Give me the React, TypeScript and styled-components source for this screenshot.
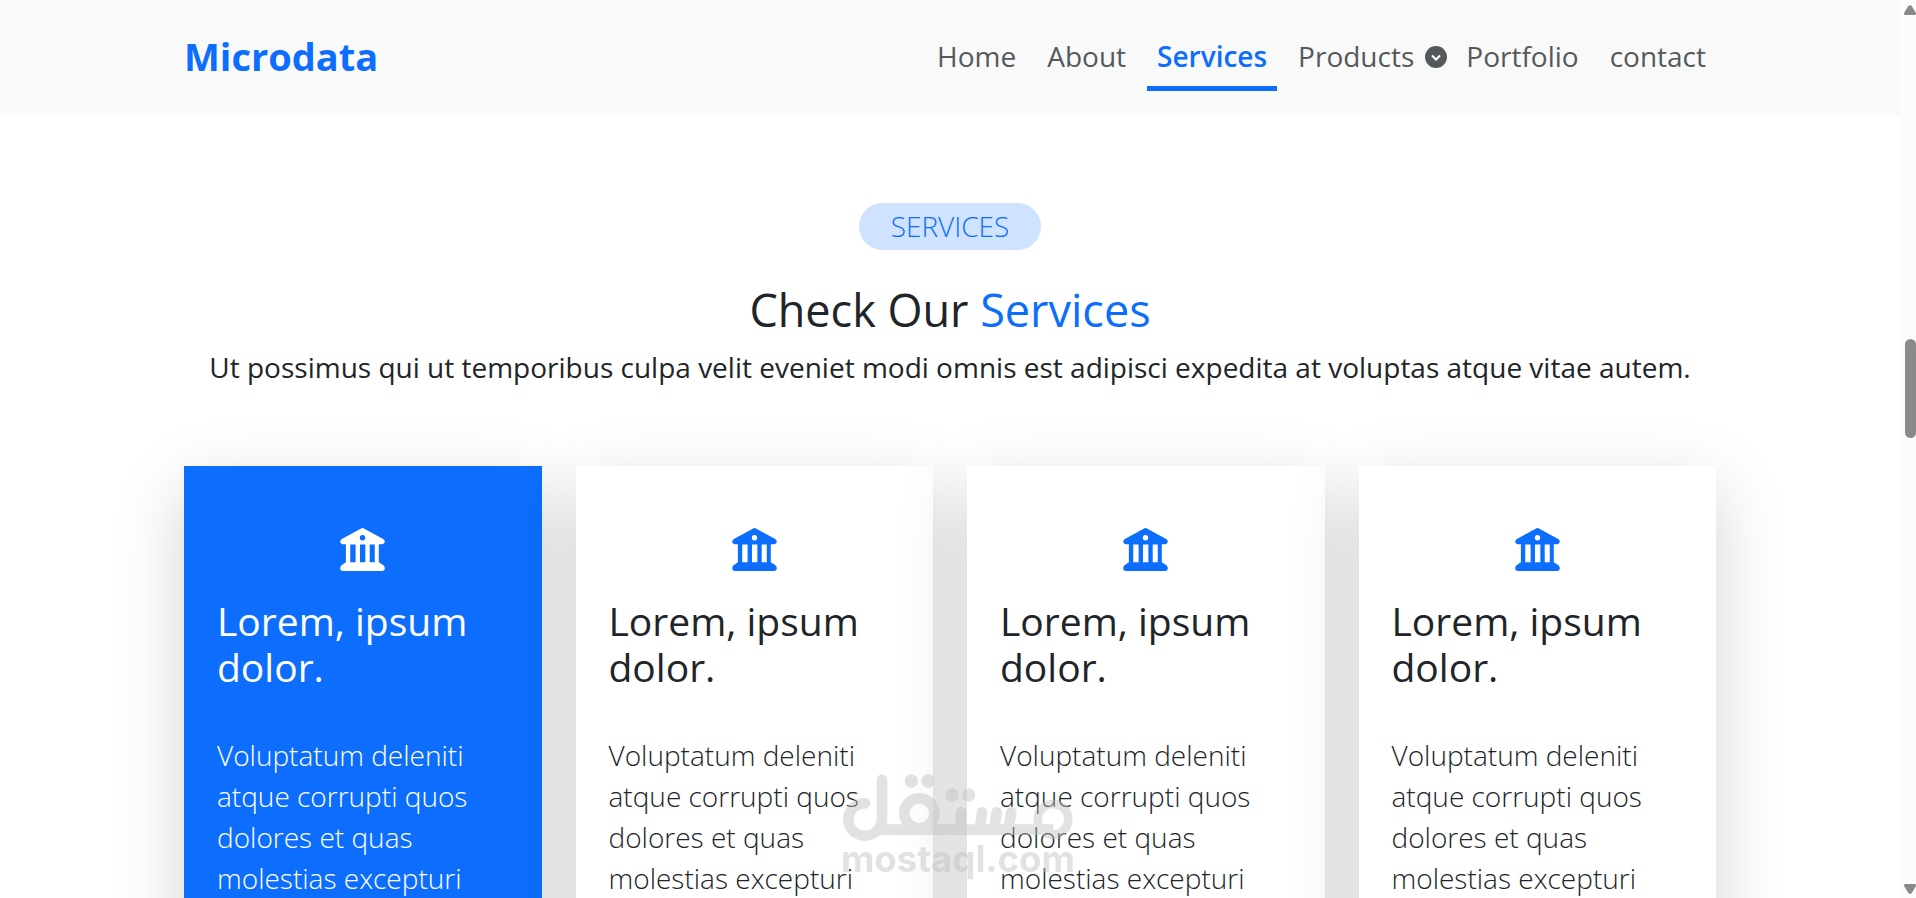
import React from "react";
import styled, { createGlobalStyle, css } from "styled-components";

const blue = "#0d6efd";
const ink = "#212529";

const GlobalStyle = createGlobalStyle`
  * { box-sizing: border-box; }
  html { overflow: hidden; height: 100%; }
  body {
    margin: 0;
    height: 100%;
    background: #fff;
    color: ${ink};
    font: 400 28px/41px "Open Sans", "Noto Sans", sans-serif;
  }
  #root { height: 100%; }
  h1, h2, h3, p { margin: 0; }
  a { color: inherit; text-decoration: none; }
`;

const Page = styled.div`
  display: flex;
  height: 100%;
`;

const Content = styled.div`
  flex: 1;
  min-width: 0;
  overflow: hidden;
`;

const Header = styled.header`
  background: linear-gradient(#f9f9f9, #f8f9fa);
`;

const Container = styled.div`
  max-width: 1532px;
  margin: 0 auto;
`;

const HeaderRow = styled(Container)`
  display: flex;
  align-items: center;
  justify-content: space-between;
  height: 115px;
`;

const Brand = styled.a`
  && { color: ${blue}; }
  padding-bottom: 2px;
  font-size: 38px;
  font-weight: 700;
`;

const NavList = styled.ul`
  display: flex;
  align-items: center;
  gap: 11px;
  margin: 0;
  padding: 0;
  list-style: none;
`;

const NavItem = styled.li<{ $menu?: boolean }>`
  margin-right: ${(p) => (p.$menu ? -12 : 0)}px;
`;

const NavLink = styled.a<{ $active?: boolean }>`
  display: flex;
  align-items: center;
  gap: 11px;
  padding: 7px 10px 9px;
  border-top: 5px solid transparent;
  border-bottom: 5px solid transparent;
  color: #55595c;
  svg { width: 22px; height: 22px; }
  ${(p) =>
    p.$active &&
    css`
      && { color: ${blue}; }
      font-weight: 600;
      border-bottom-color: ${blue};
    `}
`;

const Section = styled.section`
  padding-top: 88px;
`;

const Intro = styled.div`
  display: flex;
  flex-direction: column;
  align-items: center;
  text-align: center;
  margin-bottom: 78px;
`;

const Pill = styled.span`
  padding: 3px 32px;
  border-radius: 24px;
  background: #cfe2ff;
  color: ${blue};
  font-weight: 300;
`;

const Title = styled.h2`
  margin: 33px 0 11px;
  font-size: 45px;
  line-height: 53px;
  font-weight: 500;
  span { color: ${blue}; }
`;

const Cards = styled.div`
  display: grid;
  grid-template-columns: repeat(4, minmax(0, 1fr));
  gap: 34px;
`;

const Card = styled.article<{ $active?: boolean }>`
  position: relative;
  padding: 62px 33px;
  background: ${(p) => (p.$active ? blue : "#fff")};
  color: ${(p) => (p.$active ? "#fff" : ink)};
  box-shadow: 0 22px 66px rgba(0, 0, 0, 0.175);
`;

const CardIcon = styled.div<{ $active?: boolean }>`
  display: flex;
  justify-content: center;
  color: ${(p) => (p.$active ? "#fff" : blue)};
  svg { width: 45px; height: 43px; }
`;

const CardTitle = styled.h3`
  margin: 27px 0 45px;
  font-size: 39px;
  line-height: 46px;
  font-weight: 500;
`;

const CardText = styled.p`
  font-weight: 300;
`;

const ScrollTrack = styled.div`
  display: flex;
  flex-direction: column;
  align-items: center;
  justify-content: space-between;
  width: 16px;
  padding: 5px 0 4px 4px;
  background: #fcfcfc;
  svg { width: 12px; height: 10px; }
`;

const ScrollThumb = styled.div`
  width: 11px;
  height: 99px;
  margin-bottom: 122px;
  border-radius: 6px;
  background: #8a8a8a;
`;

const WatermarkLayer = styled.div`
  position: fixed;
  left: 0;
  right: 0;
  bottom: 16px;
  display: flex;
  justify-content: center;
  opacity: 0.46;
  pointer-events: none;
  svg { width: 236px; height: 110px; }
  text { font: 700 110px "Inter", sans-serif; }
`;

const Bank = () => (
  <svg viewBox="0 0 133 128" fill="currentColor" fillRule="evenodd" aria-hidden="true">
    <path d="M61 2Q66.500-2 72 2L128 33Q133 36 133 41Q132 48 125 48H115V102L128 110Q133 114 133 119Q133 128 124 128H9Q0 128 0 119Q0 114 5 110L17 102V48H8Q1 48 0 41Q0 36 5 33ZM30 49V102H46V49ZM59 49V102H75V49ZM88 49V102H103V49ZM66.500 21A8 8 0 1 0 66.500 37A8 8 0 1 0 66.500 21Z" />
  </svg>
);

const CircleChevron = () => (
  <svg viewBox="0 0 22 22" aria-hidden="true">
    <circle cx="11" cy="11" r="11" fill="currentColor" />
    <path d="M7 9.500L11 13.500L15 9.500" fill="none" stroke="#fff" strokeWidth="2" />
  </svg>
);

const Watermark = () => (
  <WatermarkLayer>
    <svg viewBox="60 96 708 330" role="img" aria-label="مستقل mostaql.com">
      <g fill="none" stroke="#c0c0c0" strokeWidth="32" strokeLinecap="round">
        <path d="M135 190C105 190 85 212 85 238C85 266 108 287 135 287C164 287 186 264 186 238V119" />
        <path d="M180 269H700" strokeLinecap="butt" />
        <circle cx="298" cy="220" r="45" />
        <path d="M423 217V269M486 217L480 262M530 217L523 262M574 217L566 262" />
        <circle cx="699" cy="238" r="46" strokeWidth="26" />
      </g>
      <g fill="#c0c0c0">
        <circle cx="274" cy="123" r="20" />
        <circle cx="324" cy="123" r="20" />
        <circle cx="396" cy="165" r="20" />
        <circle cx="446" cy="165" r="20" />
        <text x="414" y="395" textAnchor="middle">mostaql.com</text>
      </g>
    </svg>
  </WatermarkLayer>
);

const links = ["Home", "About", "Services", "Products", "Portfolio", "contact"];
const cards = [1, 2, 3, 4];

export default function App() {
  return (
    <>
      <GlobalStyle />
      <Page>
        <Content>
          <Header>
            <HeaderRow>
              <Brand href="#home">Microdata</Brand>
              <nav>
                <NavList>
                  {links.map((name) => (
                    <NavItem key={name} $menu={name === "Products"}>
                      <NavLink
                        href={`#${name.toLowerCase()}`}
                        $active={name === "Services"}
                      >
                        {name}
                        {name === "Products" && <CircleChevron />}
                      </NavLink>
                    </NavItem>
                  ))}
                </NavList>
              </nav>
            </HeaderRow>
          </Header>
          <Section id="services">
            <Container>
              <Intro>
                <Pill>SERVICES</Pill>
                <Title>
                  Check Our <span>Services</span>
                </Title>
                <p>
                  Ut possimus qui ut temporibus culpa velit eveniet modi omnis est
                  adipisci expedita at voluptas atque vitae autem.
                </p>
              </Intro>
              <Cards>
                {cards.map((id) => (
                  <Card key={id} $active={id === 1}>
                    <CardIcon $active={id === 1}>
                      <Bank />
                    </CardIcon>
                    <CardTitle>Lorem, ipsum dolor.</CardTitle>
                    <CardText>
                      Voluptatum deleniti atque corrupti quos dolores et quas
                      molestias excepturi
                    </CardText>
                  </Card>
                ))}
              </Cards>
            </Container>
          </Section>
        </Content>
        <ScrollTrack aria-hidden="true">
          <svg viewBox="0 0 12 10">
            <path d="M6 0Q7 0 8 1.500L12 8Q12 10 11 10H1Q0 10 0 8L4 1.500Q5 0 6 0Z" fill="#8a8a8a" />
          </svg>
          <ScrollThumb />
          <svg viewBox="0 0 12 10">
            <path d="M6 10Q7 10 8 8.500L12 2Q12 0 11 0H1Q0 0 0 2L4 8.500Q5 10 6 10Z" fill="#8a8a8a" />
          </svg>
        </ScrollTrack>
      </Page>
      <Watermark />
    </>
  );
}
